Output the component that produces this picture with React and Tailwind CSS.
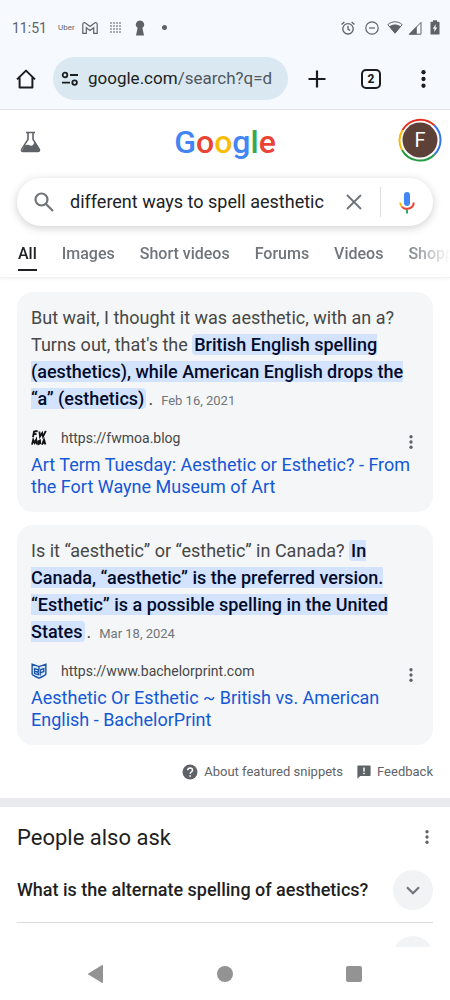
import { useState } from "react";

const TABS = ["All", "Images", "Short videos", "Forums", "Videos", "Shopping"];

const SNIPPETS = [
  {
    lead: "But wait, I thought it was aesthetic, with an a? Turns out, that's the ",
    answer: "British English spelling (aesthetics), while American English drops the “a” (esthetics)",
    date: "Feb 16, 2021",
    url: "https://fwmoa.blog",
    title: "Art Term Tuesday: Aesthetic or Esthetic? - From the Fort Wayne Museum of Art",
    Favicon: FwmoaIcon,
  },
  {
    lead: "Is it “aesthetic” or “esthetic” in Canada? ",
    answer: "In Canada, “aesthetic” is the preferred version. “Esthetic” is a possible spelling in the United States",
    date: "Mar 18, 2024",
    url: "https://www.bachelorprint.com",
    title: "Aesthetic Or Esthetic ~ British vs. American English - BachelorPrint",
    Favicon: BachelorIcon,
  },
];

function FwmoaIcon() {
  return (
    <svg viewBox="0 0 16 16" className="h-4 w-4" fill="none" stroke="#111" strokeWidth="1.8" aria-hidden="true">
      <path d="M2 7.2 3 1.6 6.6 1M2.6 4.4 5.6 3.8M8.4 1.5l.6 5L11.2 3l.8 3.6L14.8.8" />
      <path d="M1 14.6l1.2-4.8 1.4 3 1.6-3.3.6 5M7.4 11.2l1.6-.8.2 2.8-1.6.8zM11 14.8l2-5.2 1.4 5M11.6 13l2.6-.6" />
    </svg>
  );
}

function BachelorIcon() {
  return (
    <svg viewBox="0 0 17 17" className="h-4 w-4" fill="none" stroke="#1d55a8" aria-hidden="true">
      <path d="M1.2 1.2 8.5 3.8l7.3-2.6v10.6c0 1.8-4.2 2.4-7.3 4.4-3.1-2-7.3-2.6-7.3-4.4z" fill="#dcebfb" strokeWidth="1.5" />
      <path d="M8.5 4v3M3.8 6l4 1.2v1.9l-1.6.4 1.6.9v2L3.8 11.2zM4.2 8.8l3 .6M9.8 13.4V7.2L13.6 6v3l-3.6 1.4" strokeWidth="1.4" />
    </svg>
  );
}

function Dots({ className }) {
  return (
    <svg viewBox="0 0 4 16" className={className} fill="currentColor" aria-hidden="true">
      <circle cx="2" cy="2" r="1.9" />
      <circle cx="2" cy="8" r="1.9" />
      <circle cx="2" cy="14" r="1.9" />
    </svg>
  );
}

function StatusBar() {
  return (
    <div className="flex h-[55px] items-center justify-between pr-[10px] pl-3 text-[#5f6368]">
      <div className="flex items-center">
        <span className="w-[46px] text-sm">11:51</span>
        <span className="w-6 text-[8px]">Uber</span>
        <svg viewBox="0 0 16 12" className="h-3 w-4" fill="none" stroke="currentColor" strokeWidth="1.2" aria-hidden="true">
          <path d="M.8 2.2C.8.7 2.4.3 3.4 1.1L8 4.6l4.6-3.5c1-.8 2.6-.4 2.6 1.1v9.1h-3.5V5.8L8 8.6 4.3 5.8v5.5H.8z" />
        </svg>
        <svg viewBox="0 0 11 11" className="ml-3 h-[11px] w-[11px]" fill="#aaadb0" aria-hidden="true">
          {[0, 3, 6, 9].map((y) => [0, 3, 6, 9].map((x) => <rect key={`${x}-${y}`} x={x} y={y} width="2" height="2" />))}
        </svg>
        <svg viewBox="0 0 10 16" className="ml-[14px] h-4 w-[10px]" fill="currentColor" aria-hidden="true">
          <path d="M5 .5a4 4 0 0 0-2.4 7.3L1 15.5h8L7.4 7.8A4 4 0 0 0 5 .5z" />
        </svg>
        <span className="ml-[17px] h-[5px] w-[5px] rounded-full bg-[#5f6368]" />
      </div>

      <div className="flex items-center">
        <svg viewBox="0 0 14 14" className="h-[14px] w-[14px]" fill="none" stroke="currentColor" strokeWidth="1.3" aria-hidden="true">
          <circle cx="7" cy="7.8" r="5.2" />
          <path d="M7 4.8v3.3l2.2 1.4M.6 3.4 3.4.9M13.4 3.4 10.6.9" />
        </svg>
        <svg viewBox="0 0 14 14" className="ml-[10px] h-[14px] w-[14px]" fill="none" stroke="currentColor" strokeWidth="1.2" aria-hidden="true">
          <circle cx="7" cy="7" r="6.2" />
          <path d="M4 7h6" />
        </svg>
        <svg viewBox="0 0 16 13" className="ml-2 h-[13px] w-4" aria-hidden="true">
          <path d="M.8 3.6C5-.1 11-.1 15.2 3.6L8 12.2z" fill="none" stroke="currentColor" />
          <path d="M2.4 5.4c3.4-2.6 7.8-2.6 11.2 0L8 12.4z" fill="currentColor" />
        </svg>
        <svg viewBox="0 0 14 14" className="ml-[5px] h-[14px] w-[14px]" aria-hidden="true">
          <path d="M1.5 13.2H13V1.4z" fill="none" stroke="currentColor" />
          <path d="M.6 13.6h8.2V5.2z" fill="currentColor" />
        </svg>
        <svg viewBox="0 0 10 15" className="ml-2 h-[15px] w-[10px]" aria-hidden="true">
          <path d="M3 .3h4v1.5h1.8c.4 0 .7.3.7.7v11.4c0 .4-.3.7-.7.7H1.2a.7.7 0 0 1-.7-.7V2.5c0-.4.3-.7.7-.7H3z" fill="currentColor" />
          <path d="M5.8 4 2.8 8.8h1.7L4.2 12l3-4.6H5.4z" fill="#f6f9fe" />
        </svg>
      </div>
    </div>
  );
}

function BrowserBar() {
  return (
    <div className="flex items-center border-b border-[#e1e4ea] pt-[2px] pb-[9px] pl-4 text-[#1b1d20]">
      <button aria-label="Home" className="flex h-[43px] w-[37px] items-center">
        <svg viewBox="0 0 20 20" className="h-5 w-5" fill="none" stroke="currentColor" strokeWidth="2" strokeLinejoin="round" aria-hidden="true">
          <path d="M1 10.4 10 1.6l9 8.8M3.6 8.4v10h12.8v-10" />
        </svg>
      </button>
      <button className="flex h-[43px] min-w-0 flex-1 items-center gap-[9px] overflow-hidden rounded-full bg-[#dae8f1] px-2 text-[17px] whitespace-nowrap">
        <svg viewBox="0 0 18 16" className="h-4 w-[18px] shrink-0" fill="none" stroke="currentColor" strokeWidth="1.8" aria-hidden="true">
          <circle cx="4" cy="4" r="2.3" />
          <circle cx="13.6" cy="11.6" r="2.3" />
          <path d="M9 4h8M1 11.6h8" />
        </svg>
        <span>google.com<span className="text-[#50575e]">/search?q=d</span></span>
      </button>
      <button aria-label="New tab" className="flex h-[43px] w-[58px] items-center justify-center">
        <svg viewBox="0 0 18 18" className="h-[18px] w-[18px]" stroke="currentColor" strokeWidth="2.2" aria-hidden="true">
          <path d="M9 .5v17M.5 9h17" />
        </svg>
      </button>
      <button aria-label="Switch tabs" className="flex h-[43px] w-[50px] items-center justify-center">
        <span className="flex h-5 w-5 items-center justify-center rounded-[5px] border-2 border-[#1b1d20] text-xs font-extrabold">2</span>
      </button>
      <button aria-label="More options" className="flex h-[43px] w-[54px] items-center justify-center">
        <Dots className="h-[18px] w-[5px]" />
      </button>
    </div>
  );
}

function Avatar() {
  return (
    <button aria-label="Account" className="h-11 w-11">
      <svg viewBox="0 0 44 44" className="h-11 w-11" fill="none" strokeWidth="2" aria-hidden="true">
        <path d="M4.5 12A20.5 20.5 0 0 1 36.5 7.5" stroke="#ea2f22" />
        <path d="M36.5 7.5A20.5 20.5 0 0 1 36.5 36.5" stroke="#3273f0" />
        <path d="M36.5 36.5A20.5 20.5 0 0 1 4 32" stroke="#249a41" />
        <path d="M4 32A20.5 20.5 0 0 1 4.5 12" stroke="#fbb705" />
        <circle cx="22" cy="22" r="17.5" fill="#5d4037" />
        <text x="22" y="29" textAnchor="middle" fontSize="20" fill="#fff">F</text>
      </svg>
    </button>
  );
}

function SearchHeader() {
  const [query, setQuery] = useState("different ways to spell aesthetic");
  const [active, setActive] = useState("All");

  return (
    <header className="border-b border-[#f1f1f1] shadow-[0_1px_3px_rgba(0,0,0,0.05)]">
      <div className="flex h-[60px] items-center justify-between px-2">
        <button aria-label="Search Labs" className="flex h-11 w-11 items-center pt-1 pl-3 text-[#5f6368]">
          <svg viewBox="0 0 22 22" className="h-[22px] w-[22px]" aria-hidden="true">
            <path d="M6 1.5h9M8 1.5v6.8L1.8 18.2c-.7 1.2 0 2.2 1.2 2.2h15c1.2 0 1.9-1 1.2-2.2L13 8.3V1.5" fill="none" stroke="currentColor" strokeWidth="1.6" />
            <path d="M4.4 14.4c2.4-1 4.2-.8 6 .2 1.8 1 3.2-1.2 4.4-4.2l5 8.4-1 1.6H2z" fill="currentColor" />
          </svg>
        </button>
        <a href="#" aria-label="Google" className="pt-1 text-[32px] leading-9 font-medium">
          <span className="text-[#4285f4]">G</span>
          <span className="text-[#ea4335]">o</span>
          <span className="text-[#fbbc05]">o</span>
          <span className="text-[#4285f4]">g</span>
          <span className="text-[#34a853]">l</span>
          <span className="text-[#ea4335]">e</span>
        </a>
        <Avatar />
      </div>

      <form className="mx-[17px] mt-2 flex h-12 items-center rounded-full bg-white pl-[17px] shadow-[0_2px_8px_rgba(60,64,67,0.25)]" onSubmit={(e) => e.preventDefault()}>
        <button aria-label="Search" className="w-9 shrink-0">
          <svg viewBox="0 0 20 20" className="h-5 w-5" fill="none" stroke="#70757a" strokeWidth="2.2" aria-hidden="true">
            <circle cx="7.5" cy="7.5" r="6" />
            <path d="m12 12 7 7" />
          </svg>
        </button>
        <input
          aria-label="Search query"
          className="min-w-0 flex-1 bg-transparent text-lg text-[#202124] outline-none"
          value={query}
          onChange={(e) => setQuery(e.target.value)}
        />
        <button type="button" aria-label="Clear" className="mr-[18px] shrink-0" onClick={() => setQuery("")}>
          <svg viewBox="0 0 16 16" className="h-4 w-4" stroke="#70757a" strokeWidth="1.9" aria-hidden="true">
            <path d="m1 1 14 14M15 1 1 15" />
          </svg>
        </button>
        <button type="button" aria-label="Voice search" className="flex h-[30px] w-[53px] shrink-0 items-center justify-center border-l border-[#dadce0]">
          <svg viewBox="0 0 16 23" className="h-[23px] w-4" fill="none" strokeWidth="2" aria-hidden="true">
            <rect x="5" y="1" width="6" height="14" rx="3" fill="#4285f4" />
            <path d="M1.3 11.5c0 2 .7 3.4 1.9 4.6" stroke="#fbbc04" />
            <path d="M3 15.9c3 3.4 11.7 2.4 11.7-4.4" stroke="#ea4335" />
            <path d="M8 18.8v3.7" stroke="#34a853" />
          </svg>
        </button>
      </form>

      <nav className="mt-[18px] flex gap-[25px] overflow-hidden mask-r-from-90% mask-r-to-100% pl-[18px] text-base text-[#70757a]">
        {TABS.map((tab) => (
          <button
            key={tab}
            onClick={() => setActive(tab)}
            className={`mb-[6px] h-[27px] shrink-0 border-b-2 pb-[5px] leading-5 font-medium ${active === tab ? "border-[#202124] text-[#202124]" : "border-transparent"}`}
          >
            {tab}
          </button>
        ))}
      </nav>
    </header>
  );
}

function SnippetCard({ lead, answer, date, url, title, Favicon }) {
  return (
    <article className="rounded-2xl bg-[#f4f6f8] pt-3 pr-3 pb-[14px] pl-[14px]">
      <p className="text-lg leading-[27px] text-[#474747]">
        {lead}
        <mark className="rounded-sm bg-[#d3e3fd] px-[2px] font-medium text-[#020b2d]">{answer}</mark>
        <span className="ml-[2px]">.</span>
        <span className="ml-2 text-[13px] leading-none text-[#70757a]">{date}</span>
      </p>
      <div className="mt-[15px] flex h-[22px] items-center text-sm text-[#474747]">
        <Favicon />
        <span className="ml-[14px] flex-1">{url}</span>
        <button aria-label="More about this result" className="flex w-5 justify-center pt-2 text-[#5f6368]">
          <Dots className="h-[14px] w-[4px]" />
        </button>
      </div>
      <a href="#" className="mt-[5px] block text-lg leading-[22px] text-[#1558d6]">{title}</a>
    </article>
  );
}

function PeopleAlsoAsk() {
  return (
    <section className="border-t-[9px] border-[#e8eaed] px-[17px]">
      <div className="flex h-[60px] items-center justify-between text-[#1f1f1f]">
        <h2 className="text-[22px]">People also ask</h2>
        <button aria-label="More about people also ask" className="pr-1 text-[#5f6368]">
          <Dots className="h-[14px] w-[4px]" />
        </button>
      </div>
      {["What is the alternate spelling of aesthetics?", ""].map((question) => (
        <button key={question} className="flex w-full items-start justify-between border-b border-[#dadce0] pt-[3px] pb-3 text-left text-lg leading-10 text-[#1f1f1f] not-first:not-nth-2:pt-[13px]">
          <span className="font-medium">{question}</span>
          <span className="flex h-10 w-10 items-center justify-center rounded-full bg-[#f1f3f4]">
            <svg viewBox="0 0 14 9" className="h-[9px] w-[14px]" fill="none" stroke="#70757a" strokeWidth="2.2" aria-hidden="true">
              <path d="m1 1.3 6 6 6-6" />
            </svg>
          </span>
        </button>
      ))}
    </section>
  );
}

function SystemNav() {
  return (
    <nav className="flex h-[53px] shrink-0 items-center justify-between bg-white px-[88px] text-[#939393]">
      <button aria-label="Back">
        <svg viewBox="0 0 16 18" className="h-[18px] w-4" fill="currentColor" aria-hidden="true">
          <path d="M15 .5v17c0 .5-.4.6-.8.4L.3 9.5c-.4-.3-.4-.7 0-1L14.2.1c.4-.2.8-.1.8.4z" />
        </svg>
      </button>
      <button aria-label="Home screen" className="h-4 w-4 rounded-full bg-[#939393]" />
      <button aria-label="Recent apps" className="h-4 w-4 rounded-xs bg-[#939393]" />
    </nav>
  );
}

export default function App() {
  return (
    <div className="flex h-screen flex-col overflow-hidden bg-white font-['Roboto',sans-serif]">
      <div className="shrink-0 bg-[#f6f9fe]">
        <StatusBar />
        <BrowserBar />
      </div>
      <main className="min-h-0 flex-1 overflow-hidden">
        <SearchHeader />
        <div className="flex flex-col gap-[13px] px-[17px] pt-[14px]">
          {SNIPPETS.map((snippet) => (
            <SnippetCard key={snippet.url} {...snippet} />
          ))}
        </div>
        <div className="flex h-[53px] items-center justify-end gap-[14px] px-[17px] text-[13px] text-[#5f6368]">
          <a href="#" className="flex items-center gap-[6px]">
            <svg viewBox="0 0 16 16" className="h-4 w-4" aria-hidden="true">
              <circle cx="8" cy="8" r="7.5" fill="currentColor" />
              <path d="M5.7 6.3c0-3 4.8-2.9 4.8 0 0 1.7-2.4 1.7-2.4 3.5M8.1 11.2v1.6" fill="none" stroke="#fff" strokeWidth="1.5" />
            </svg>
            About featured snippets
          </a>
          <a href="#" className="flex items-center gap-[6px]">
            <svg viewBox="0 0 14 14" className="h-[14px] w-[14px]" aria-hidden="true">
              <path d="M1.4.5h11.2c.6 0 1 .4 1 1v8.6c0 .6-.4 1-1 1H3.2L.4 13.8V1.5c0-.6.4-1 1-1z" fill="currentColor" />
              <path d="M7 2.4v4M7 7.8v1.5" stroke="#fff" strokeWidth="1.5" />
            </svg>
            Feedback
          </a>
        </div>
        <PeopleAlsoAsk />
      </main>
      <SystemNav />
    </div>
  );
}
